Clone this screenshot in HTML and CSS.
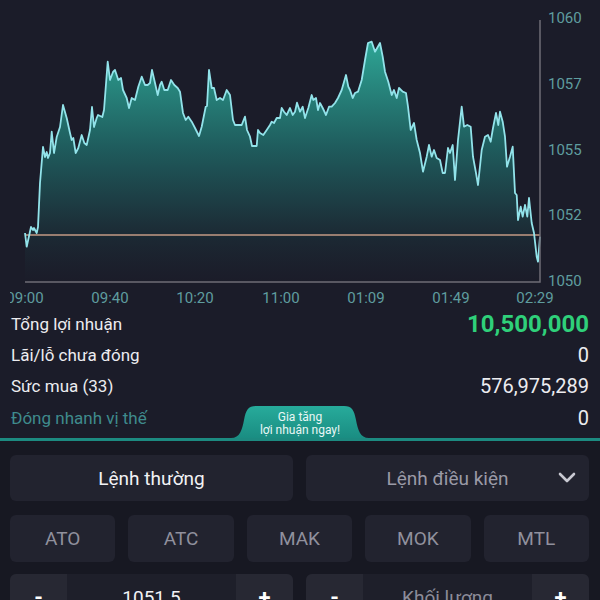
FILE: index.html
```html
<!DOCTYPE html>
<html lang="vi">
<head>
    <meta charset="UTF-8">
    <meta name="viewport" content="width=device-width, initial-scale=1.0">
    <title>Giao dịch phái sinh</title>
    <link rel="stylesheet" href="styles.css">
</head>
<body>
    <div class="chart">
        <svg width="600" height="308" viewBox="0 0 600 308">
            <defs>
                <linearGradient id="areaFill" x1="0" y1="40" x2="0" y2="282" gradientUnits="userSpaceOnUse">
                    <stop offset="0" stop-color="#2fae9c" stop-opacity="0.95"/>
                    <stop offset="0.45" stop-color="#1f6262" stop-opacity="0.9"/>
                    <stop offset="0.8" stop-color="#1c2c36" stop-opacity="0.9"/>
                    <stop offset="1" stop-color="#1b1c29" stop-opacity="0.6"/>
                </linearGradient>
                <clipPath id="chartClip">
                    <rect x="10" y="0" width="590" height="308"/>
                </clipPath>
            </defs>
            <g clip-path="url(#chartClip)">
                <path id="area" fill="url(#areaFill)" d=""/>
                <line class="base" x1="25" y1="235" x2="540" y2="235"/>
                <polyline id="price" class="price" points=""/>
                <polyline class="axis" points="540,20 540,282 25,282"/>
                <g class="y-labels">
                    <text x="548" y="23">1060</text>
                    <text x="548" y="89">1057</text>
                    <text x="548" y="155">1055</text>
                    <text x="548" y="220">1052</text>
                    <text x="548" y="286">1050</text>
                </g>
                <g class="x-labels">
                    <text x="25" y="303">09:00</text>
                    <text x="110" y="303">09:40</text>
                    <text x="195" y="303">10:20</text>
                    <text x="281" y="303">11:00</text>
                    <text x="366" y="303">01:09</text>
                    <text x="451" y="303">01:49</text>
                    <text x="535" y="303">02:29</text>
                </g>
            </g>
        </svg>
    </div>

    <div class="stats">
        <div class="stat-row">
            <span>Tổng lợi nhuận</span>
            <span class="value profit">10,500,000</span>
        </div>
        <div class="stat-row">
            <span>Lãi/lỗ chưa đóng</span>
            <span class="value">0</span>
        </div>
        <div class="stat-row">
            <span>Sức mua (33)</span>
            <span class="value">576,975,289</span>
        </div>
        <div class="stat-row last">
            <span class="quick">Đóng nhanh vị thế</span>
            <div class="promo-tab">
                <svg class="tab-shape" width="138" height="32" viewBox="0 0 138 32">
                    <defs>
                        <linearGradient id="tabFill" x1="0" y1="0" x2="0" y2="1">
                            <stop offset="0" stop-color="#27ab9b"/>
                            <stop offset="1" stop-color="#1a8d82"/>
                        </linearGradient>
                    </defs>
                    <path fill="url(#tabFill)" d="M0,32 C9,32 11,24 13,14 C15,4 17,0 25,0 H113 C121,0 123,4 125,14 C127,24 129,32 138,32 Z"/>
                </svg>
                <span class="tab-text">Gia tăng<br>lợi nhuận ngay!</span>
            </div>
            <span class="value">0</span>
        </div>
    </div>

    <div class="order-panel">
        <div class="order-types">
            <button class="btn btn-main">Lệnh thường</button>
            <button class="btn btn-select">
                <span></span>
                <span>Lệnh điều kiện</span>
                <svg class="chevron" width="18" height="12" viewBox="0 0 18 12">
                    <polyline points="2,2 9,9 16,2" fill="none" stroke="#c9c9d2" stroke-width="2.6" stroke-linecap="round" stroke-linejoin="round"/>
                </svg>
            </button>
        </div>
        <div class="price-types">
            <button class="btn">ATO</button>
            <button class="btn">ATC</button>
            <button class="btn">MAK</button>
            <button class="btn">MOK</button>
            <button class="btn">MTL</button>
        </div>
        <div class="inputs">
            <div class="stepper">
                <span class="step">-</span>
                <span class="field">1051.5</span>
                <span class="step">+</span>
            </div>
            <div class="stepper">
                <span class="step">-</span>
                <span class="field placeholder">Khối lượng</span>
                <span class="step">+</span>
            </div>
        </div>
    </div>

    <script>
        // intraday price trace, in chart pixels
        const points = [
            [25,233],[26.7,246.7],[31,227],[33,230],[34,228],[36.7,233],[38,227],[40,183],[43,147],[45,157],
            [46.7,152],[48,158],[50,153],[51.7,131.7],[54,153],[56.7,137],[60,127],[63,105],[66.7,118],[70,133],
            [71.7,140],[73.3,138],[75.7,153],[78.3,148],[81.7,135],[84.3,143],[86.7,145],[90,130],[92,107],[94,127],
            [96.7,118],[98,115],[102.3,117],[104,110],[107.7,61.7],[110,80],[113,72],[115,70],[118.3,80],[121,78],
            [123,90],[126.7,98],[129,108],[131.7,98],[135,100],[138.3,86.7],[141.7,76.7],[145,85],[147.7,85],[150,83],
            [152,70],[155,83],[157.7,95],[160,85],[161.7,81.7],[164.3,90],[167.7,90],[171,80],[174.3,85],[177.7,88],
            [180,91.7],[183,113],[185.7,120],[188.3,116.7],[191.7,121.7],[195,128],[199,136],[201.7,126.7],[205.7,106.7],[207,106],
            [209,70],[211.7,88],[214,88],[216.7,100],[220,98],[223,100],[226.7,90],[230,95],[233,120],[235,125],
            [238.3,125],[241.7,125],[245,116.7],[247,130],[250,136.7],[252,146],[256.7,146],[258,130],[260,133],[263.3,135],
            [266.7,130],[270,125],[271.7,121.7],[274,123],[276.7,118],[280,118],[281.7,108],[284,111.7],[286.7,115],[290,108],
            [292.7,115],[295,111.7],[297,102.7],[300,111.7],[302.7,106.7],[305,118],[308.3,108],[311.7,95],[313.3,100],[316,98],
            [318,110],[320,103],[322.7,108],[326,115],[329,106.7],[331.7,106.7],[335,103],[338,98],[341.7,90],[346,75],
            [348.3,86.7],[350,90],[352.7,98],[355,93],[358,91.7],[361.7,80],[365,60],[368,43],[371.7,41.7],[375,51.7],
            [380,43],[382.7,56.7],[385,71.7],[388.3,81.7],[391.7,95],[394,90],[396.7,98],[399,88],[402.7,91.7],[406,93],
            [408,106.7],[410.7,130],[414,123],[416.7,140],[420,153],[423,171.7],[426.7,156.7],[429,145],[431.7,156.7],[434,150],
            [436.7,158],[440,160],[442.7,173],[445,173],[448,148],[450,153],[452.7,145],[455,180],[458,140],[461.7,106.7],
            [464,126.7],[467.3,125],[470.7,126.7],[473,156.7],[476,173],[478,185],[481.7,150],[485,136.7],[488,135],[490.7,141.7],
            [493,128],[496,113],[498.3,125],[500,111.7],[502.7,121.7],[505,136.7],[507,166.7],[510,156.7],[512.7,146.7],[515,193],
            [516.7,195],[518,220],[520.7,206.7],[522.7,216.7],[525,205],[527.3,216.7],[529,198],[531.7,223],[534,233],[536.7,256.7],
            [538,261.7],[540,236.7]
        ];

        const line = points.map(p => p.join(",")).join(" ");
        document.getElementById("price").setAttribute("points", line);
        document.getElementById("area").setAttribute("d", "M25,282 L" + line.replace(/ /g, " L") + " L540,282 Z");
    </script>
</body>
</html>
```

FILE: styles.css
```css
body {
    margin: 0;
    width: 600px;
    height: 600px;
    overflow: hidden;
    background-color: #1b1c29;
    font-family: Roboto, "Liberation Sans", sans-serif;
    color: #ececf0;
}
.chart svg {
    display: block;
}
.price {
    fill: none;
    stroke: #92e3ea;
    stroke-width: 1.8;
    stroke-linejoin: round;
}
.base {
    stroke: #c39a84;
    stroke-width: 1.5;
}
.axis {
    fill: none;
    stroke: #6f6c76;
    stroke-width: 1.5;
}
.y-labels text, .x-labels text {
    fill: #5f9d9f;
    font-size: 15px;
    font-family: Roboto, "Liberation Sans", sans-serif;
}
.x-labels text {
    text-anchor: middle;
}

.stats {
    padding: 0 11px 0 11px;
    border-bottom: 3px solid #1c8a80;
}
.stat-row {
    display: flex;
    justify-content: space-between;
    align-items: center;
    height: 31px;
    font-size: 17px;
}
.stat-row .value {
    font-size: 20px;
}
.stat-row .profit {
    color: #2fd07a;
    font-weight: bold;
    font-size: 24px;
}
.stat-row.last {
    display: grid;
    grid-template-columns: 1fr auto 1fr;
    align-items: start;
    height: 37px;
}
.stat-row.last > span {
    line-height: 34px;
}
.stat-row.last .value {
    text-align: right;
}
.quick {
    color: #3f8b8d;
}
.promo-tab {
    position: relative;
    width: 138px;
    height: 32px;
    margin-top: 5px;
}
.tab-shape {
    position: absolute;
    left: 0;
    top: 0;
}
.tab-text {
    position: relative;
    display: block;
    padding-top: 5px;
    text-align: center;
    font-size: 12px;
    line-height: 13px;
    color: #e9f7f5;
}

.order-panel {
    background-color: #171822;
    padding: 14px 11px 0 10px;
    height: 200px;
}
.btn {
    border: none;
    border-radius: 6px;
    background-color: #22232f;
    color: #90909d;
    font-family: Roboto, "Liberation Sans", sans-serif;
    font-size: 19px;
    height: 47px;
    padding: 0;
}
.order-types {
    display: grid;
    grid-template-columns: 1fr 1fr;
    gap: 13px;
}
.order-types .btn {
    height: 46px;
}
.btn-main {
    color: #f2f2f5;
}
.btn-select {
    display: grid;
    grid-template-columns: 44px 1fr 44px;
    align-items: center;
    color: #9a9aa6;
}
.chevron {
    justify-self: center;
}
.price-types {
    display: grid;
    grid-template-columns: repeat(5, 1fr);
    gap: 13px;
    margin-top: 14px;
}
.inputs {
    display: grid;
    grid-template-columns: 1fr 1fr;
    gap: 13px;
    margin-top: 12px;
}
.stepper {
    display: flex;
    height: 47px;
    border-radius: 6px;
    overflow: hidden;
    background-color: #1e1f2a;
    font-size: 19px;
}
.stepper .step {
    width: 57px;
    background-color: #272833;
    color: #ffffff;
    font-weight: bold;
    font-size: 22px;
    display: flex;
    align-items: center;
    justify-content: center;
}
.stepper .field {
    flex: 1;
    display: flex;
    align-items: center;
    justify-content: center;
    color: #f2f2f5;
}
.stepper .placeholder {
    color: #8c8c99;
}
```
